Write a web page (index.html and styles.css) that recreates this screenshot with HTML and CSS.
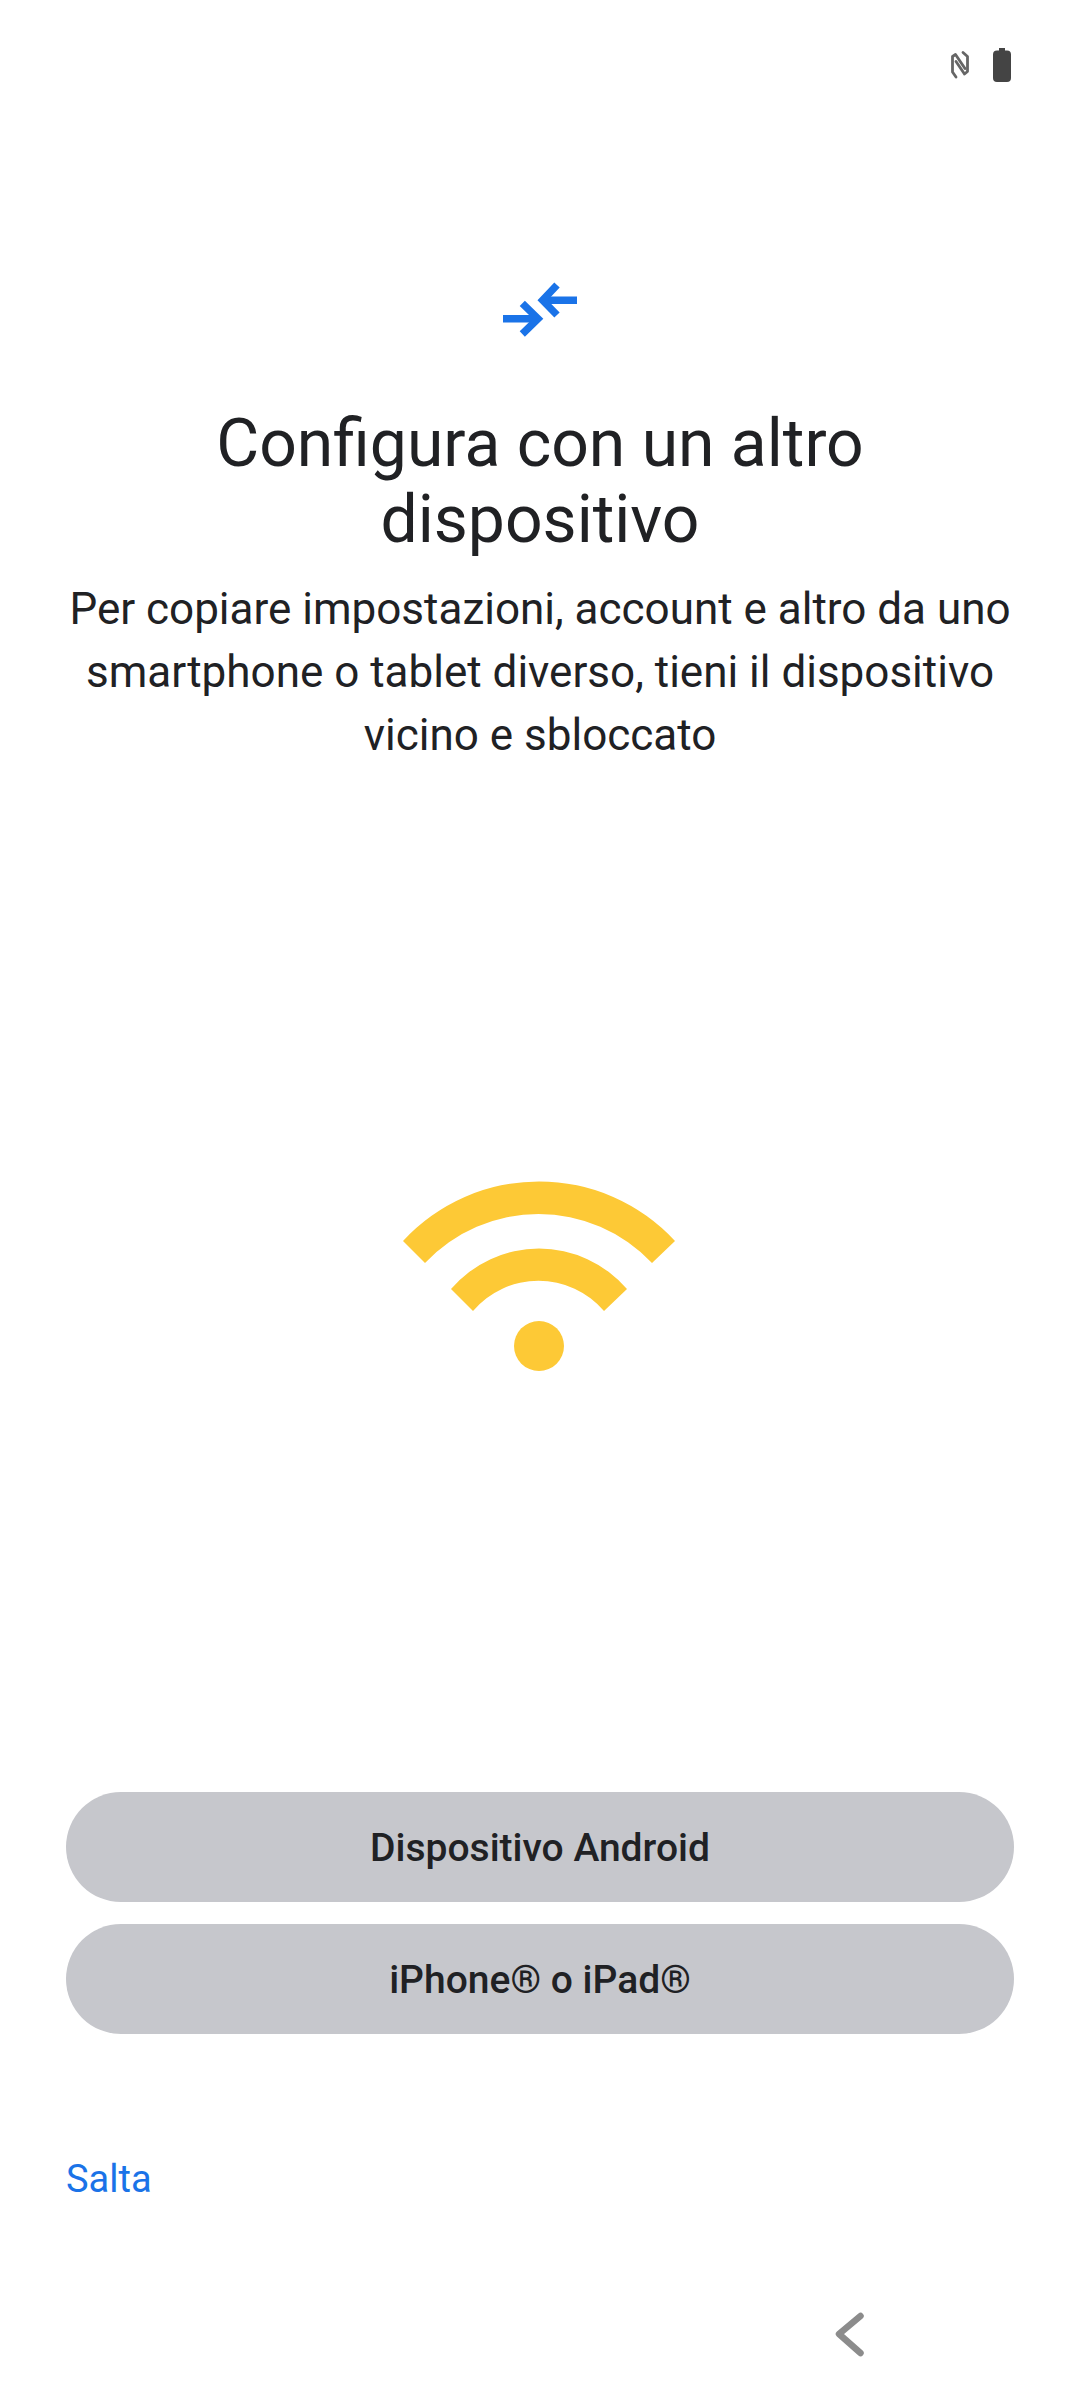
FILE: index.html
```html
<!DOCTYPE html>
<html lang="it">
<head>
    <meta charset="UTF-8">
    <meta name="viewport" content="width=device-width, initial-scale=1.0">
    <title>Configura con un altro dispositivo</title>
    <link rel="stylesheet" href="styles.css">
</head>
<body>
    <div class="page">
        <div class="status-bar">
            <svg class="nfc-icon" width="20" height="30" viewBox="0 0 20 30" fill="none" stroke="#666" stroke-width="2.8" stroke-linecap="round" stroke-linejoin="round">
                <path d="M5 27 L1.5 22 V6.5 L4.5 4.5 L14 18.5"/>
                <path d="M12 2.5 L16.5 6.5 V21.5 L13.5 24 L5 11.5"/>
            </svg>
            <svg class="battery-icon" width="18" height="34" viewBox="0 0 18 34">
                <path fill="#444" d="M6 0 H12 V2.5 H14 Q18 2.5 18 6.5 V30 Q18 34 14 34 H4 Q0 34 0 30 V6.5 Q0 2.5 4 2.5 H6 Z"/>
            </svg>
        </div>

        <div class="header-icon">
            <svg width="78" height="58" viewBox="0 0 78 58" fill="none" stroke="#1a73e8" stroke-width="7.4">
                <path d="M76 20.3 H42"/>
                <path d="M56 5 L41.6 20.3 L56 35"/>
                <path d="M2 38.7 H37"/>
                <path d="M21.3 23.4 L37 38.7 L21.3 54"/>
            </svg>
        </div>

        <h1 class="title">Configura con un altro dispositivo</h1>
        <p class="description">Per copiare impostazioni, account e altro da uno smartphone o tablet diverso, tieni il dispositivo vicino e sbloccato</p>

        <div class="illustration">
            <svg width="272" height="190" viewBox="0 0 272 190">
                <path fill="#fdc936" d="M0 60 A185 185 0 0 1 272 60 L249 82 A156 156 0 0 0 22 82 Z"/>
                <path fill="#fdc936" d="M48 108 A116 116 0 0 1 224 108 L201 130 A86 86 0 0 0 70 130 Z"/>
                <circle fill="#fdc936" cx="136" cy="165" r="25"/>
            </svg>
        </div>

        <div class="actions">
            <button class="action-button">Dispositivo Android</button>
            <button class="action-button">iPhone® o iPad®</button>
        </div>

        <a class="skip-link">Salta</a>

        <div class="nav-bar">
            <svg width="32" height="46" viewBox="0 0 32 46" fill="none" stroke="#8c8c8c" stroke-width="6.5" stroke-linecap="round" stroke-linejoin="round">
                <path d="M25.5 4 L4 22 L25.5 41"/>
            </svg>
        </div>
    </div>
</body>
</html>
```

FILE: styles.css
```css
body {
    margin: 0;
    background-color: white;
    color: #202124;
    font-family: 'Roboto', sans-serif;
}
.page {
    height: 2392px;
    display: flex;
    flex-direction: column;
    overflow: hidden;
}
.status-bar {
    display: flex;
    justify-content: flex-end;
    align-items: center;
    gap: 22px;
    height: 34px;
    padding: 48px 69px 0 0;
}
.header-icon {
    display: flex;
    justify-content: center;
    margin-top: 198px;
    height: 58px;
}
.title {
    margin: 68px auto 0;
    width: 800px;
    font-size: 66px;
    font-weight: 400;
    line-height: 76px;
    text-align: center;
}
.description {
    margin: 20px 50px 0;
    font-size: 44px;
    line-height: 63px;
    text-align: center;
}
.illustration {
    display: flex;
    justify-content: center;
    margin-top: 414px;
    padding-right: 2px;
    height: 190px;
}
.actions {
    display: flex;
    flex-direction: column;
    gap: 22px;
    margin: 421px 66px 0 66px;
}
.action-button {
    height: 110px;
    padding-top: 3px;
    border: none;
    border-radius: 55px;
    background-color: #c6c7cc;
    color: #202124;
    font-family: 'Roboto', sans-serif;
    font-size: 39px;
    font-weight: 500;
}
.skip-link {
    margin: 122px 0 0 66px;
    color: #1a73e8;
    font-size: 38px;
    line-height: 46px;
}
.nav-bar {
    display: flex;
    justify-content: flex-end;
    margin-top: 110px;
    padding-right: 213px;
}
```
